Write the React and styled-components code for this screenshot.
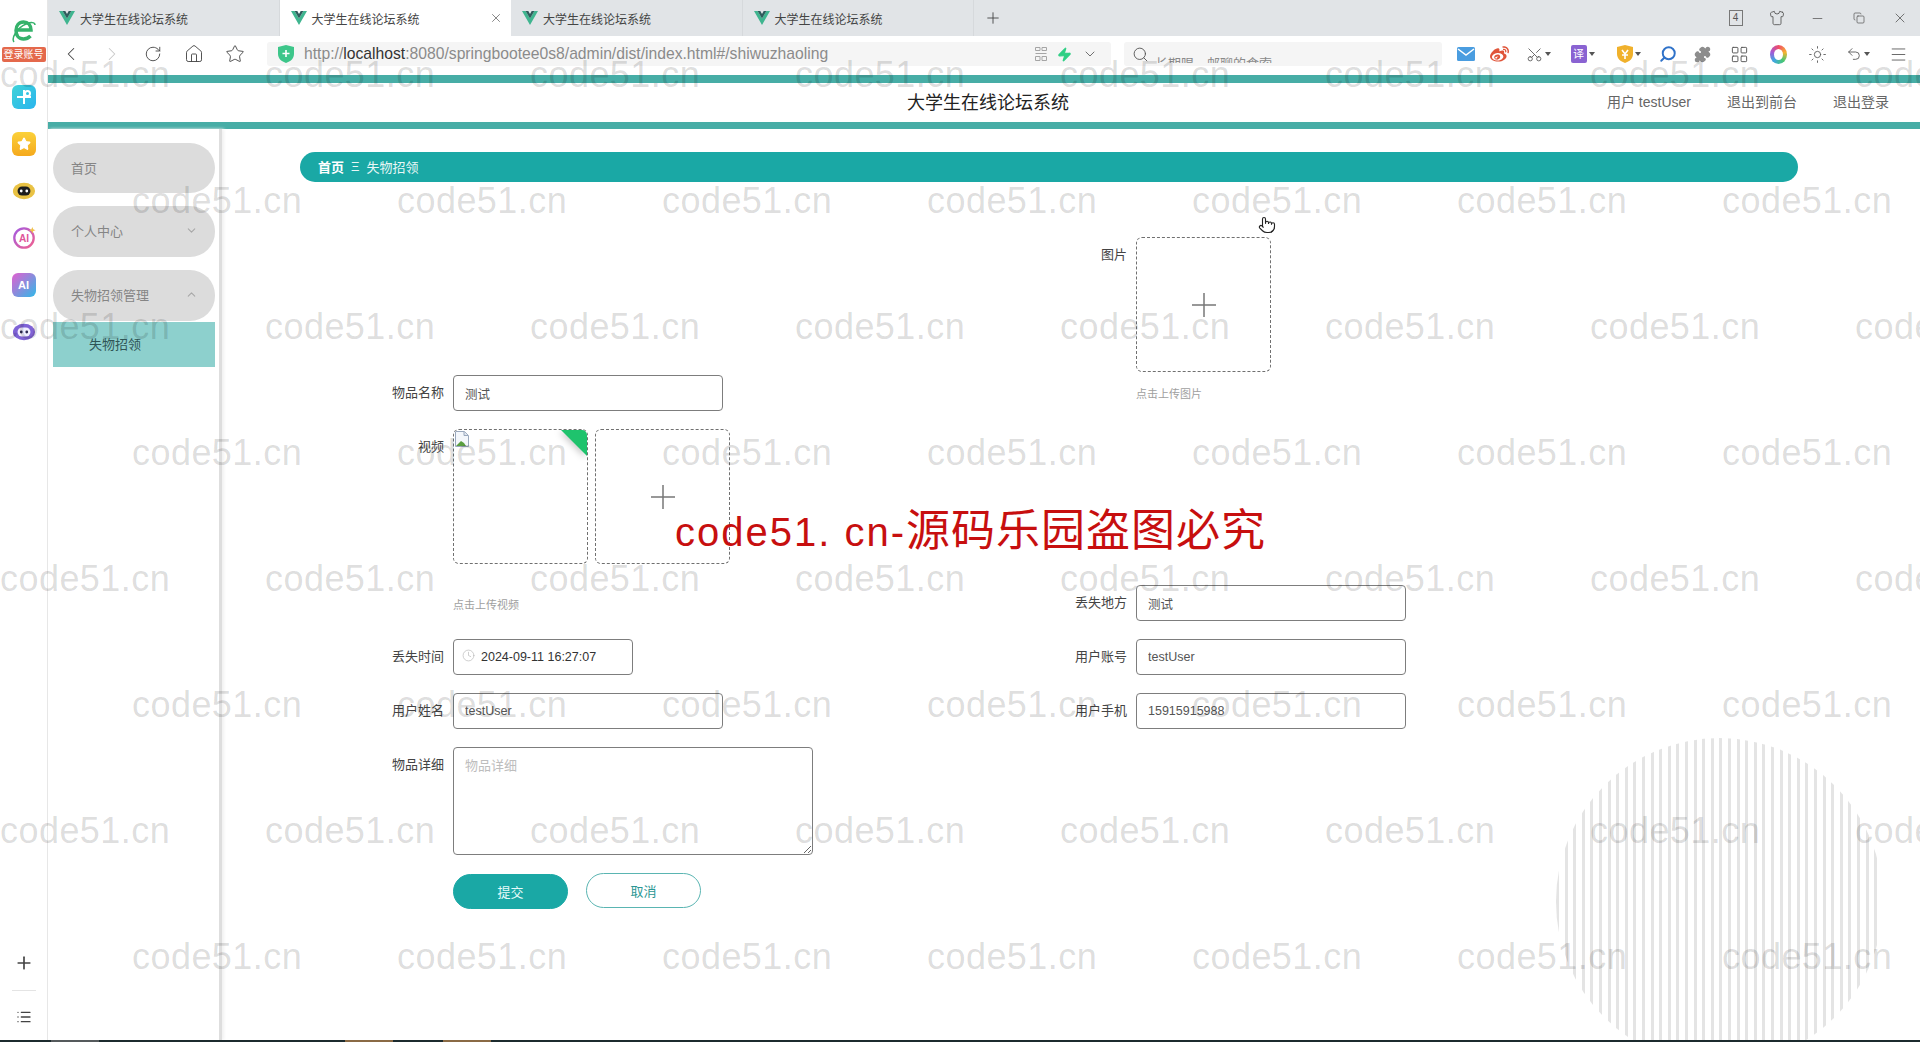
import React from 'react';
import styled, { createGlobalStyle } from 'styled-components';
import {
  ChevronDown,
  ChevronLeft,
  ChevronRight,
  ChevronUp,
  Clock,
  Copy,
  Home,
  LayoutGrid,
  List,
  Menu,
  Minus,
  Plus,
  Pointer,
  Puzzle,
  RotateCw,
  Scissors,
  Search,
  Shirt,
  Star,
  Sun,
  Undo2,
  X,
  Zap,
} from 'lucide-react';
import { FaWeibo } from 'react-icons/fa';

const GlobalStyle = createGlobalStyle`
  html, body {
    margin: 0;
    padding: 0;
    background: #ffffff;
    font-family: "Liberation Sans", "Noto Sans CJK SC", sans-serif;
  }
  * { box-sizing: border-box; }
`;

const Root = styled.div`
  position: relative;
  width: 1920px;
  height: 1042px;
  overflow: hidden;
  display: flex;
  flex-direction: column;
`;

const Body = styled.div`
  flex: 1;
  min-height: 0;
  display: flex;
`;

/* left rail of the browser */
const Rail = styled.aside`
  width: 48px;
  flex: none;
  display: flex;
  flex-direction: column;
  align-items: center;
  border-right: 1px solid #e6e6e6;
  background: #ffffff;
`;

const RailLogo = styled.div`
  width: 100%;
  height: 83px;
  padding-top: 17px;
  display: flex;
  flex-direction: column;
  align-items: center;
`;

const LoginBadge = styled.span`
  width: 44px;
  height: 15px;
  margin-top: 2px;
  background: #e4694c;
  border-radius: 2px;
  color: #ffffff;
  font-size: 10px;
  line-height: 15px;
  text-align: center;
  white-space: nowrap;
`;

const RailTile = styled.div`
  width: 24px;
  height: 24px;
  margin: 2px 0 21px;
  border-radius: ${(p) => p.$radius || '6px'};
  background: ${(p) => p.$bg};
  display: flex;
  align-items: center;
  justify-content: center;
  color: #ffffff;
  font-size: 11px;
  font-weight: 700;
`;

const RailBottom = styled.div`
  margin-top: auto;
  padding-bottom: 15px;
  display: flex;
  flex-direction: column;
  align-items: center;
  color: #444444;
`;

const RailDivider = styled.div`
  width: 24px;
  height: 1px;
  margin: 17px 0 18px;
  background: #e4e4e4;
`;

const Main = styled.div`
  flex: 1;
  min-width: 0;
  display: flex;
  flex-direction: column;
`;

/* tabs */
const TabStrip = styled.div`
  height: 36px;
  flex: none;
  display: flex;
  background: #e1e4e7;
`;

const Tab = styled.div`
  width: 231.5px;
  height: 36px;
  flex: none;
  padding-left: 11px;
  display: flex;
  align-items: center;
  gap: 5px;
  background: ${(p) => (p.$active ? '#ffffff' : 'transparent')};
  border-right: 1px solid ${(p) => (p.$active ? 'transparent' : '#d6d9dc')};
  color: #444444;
  font-size: 12px;
`;

const TabClose = styled.span`
  margin-left: auto;
  margin-right: 7px;
  display: flex;
  color: #555555;
`;

const NewTab = styled.div`
  width: 38px;
  display: flex;
  align-items: center;
  justify-content: center;
  color: #444444;
`;

const WindowControls = styled.div`
  margin-left: auto;
  display: flex;
  align-items: center;
  color: #555555;
`;

const WindowButton = styled.div`
  width: 41px;
  height: 36px;
  display: flex;
  align-items: center;
  justify-content: center;
`;

const TabCount = styled.span`
  width: 14px;
  height: 16px;
  border: 1px solid #777777;
  font-size: 10px;
  line-height: 14px;
  text-align: center;
`;

/* toolbar */
const Toolbar = styled.div`
  height: 39px;
  flex: none;
  padding: 6px 0 0 2px;
  display: flex;
  align-items: flex-start;
  background: #ffffff;
`;

const NavButton = styled.div`
  width: 41px;
  height: 24px;
  display: flex;
  align-items: center;
  justify-content: center;
  color: ${(p) => (p.$muted ? '#c8c8c8' : '#444444')};
`;

const AddressBar = styled.div`
  width: 844px;
  height: 24px;
  margin-left: 12px;
  padding: 0 13px 0 11px;
  display: flex;
  align-items: center;
  background: #f5f5f5;
  border-radius: 3px;
  color: #8b8b8b;
  font-size: 15.7px;
`;

const Url = styled.span`
  margin-left: 10px;
  white-space: nowrap;
  b {
    font-weight: 400;
    color: #333333;
  }
`;

const AddressTools = styled.div`
  margin-left: auto;
  display: flex;
  align-items: center;
  gap: 10px;
  color: #666666;
`;

const SearchBox = styled.div`
  width: 318px;
  height: 24px;
  margin-left: 13px;
  padding-left: 8px;
  display: flex;
  align-items: center;
  gap: 6px;
  background: #f5f5f5;
  border-radius: 3px;
  color: #555555;
`;

const SearchHint = styled.div`
  width: 125px;
  height: 17px;
  align-self: flex-start;
  margin-top: 4px;
  overflow: hidden;
  color: #8a8a8a;
  font-size: 13px;
  line-height: 36px;
  white-space: nowrap;
`;

const ExtensionRow = styled.div`
  margin-left: 8px;
  display: flex;
  align-items: center;
  color: #555555;
`;

const ExtButton = styled.div`
  width: ${(p) => p.$w}px;
  height: 24px;
  padding-right: ${(p) => p.$nudge || 0}px;
  display: flex;
  align-items: center;
  justify-content: center;
  gap: 2px;
`;

const Caret = styled.span`
  width: 0;
  height: 0;
  border-left: 3px solid transparent;
  border-right: 3px solid transparent;
  border-top: 4px solid #555555;
`;

const TranslateTile = styled.span`
  width: 16px;
  height: 18px;
  border-radius: 2px;
  background: #8a63d2;
  color: #ffffff;
  font-size: 11px;
  line-height: 18px;
  text-align: center;
`;

const Turned = styled.span`
  display: flex;
  transform: ${(p) => p.$turn};
`;

const ColorRing = styled.span`
  width: 17px;
  height: 19px;
  border-radius: 50%;
  background: conic-gradient(#f04d6a, #f5b32e, #48c774, #3fa7e0, #a05ad8, #f04d6a);
  display: flex;
  align-items: center;
  justify-content: center;
  &::after {
    content: '';
    width: 9px;
    height: 11px;
    border-radius: 50%;
    background: #ffffff;
  }
`;

/* site header */
const TealBar = styled.div`
  height: ${(p) => p.$h}px;
  flex: none;
  background: #47ada6;
`;

const Header = styled.header`
  height: 39px;
  flex: none;
  padding: 0 31px 4px 39px;
  display: grid;
  grid-template-columns: 1fr auto 1fr;
  align-items: center;
  background: #ffffff;
`;

const Title = styled.h1`
  grid-column: 2;
  margin: 0;
  color: #222222;
  font-size: 18px;
  font-weight: 400;
`;

const HeaderLinks = styled.nav`
  justify-self: end;
  display: flex;
  gap: 36px;
  color: #666666;
  font-size: 14px;
  white-space: nowrap;
`;

const Page = styled.div`
  flex: 1;
  min-height: 0;
  display: flex;
`;

/* side menu */
const Sidebar = styled.nav`
  width: 174px;
  flex: none;
  padding: 14px 0 0 5px;
  border-right: 3px solid #dedede;
  box-shadow: 2px 0 3px #f1f1f1;
`;

const MenuItem = styled.div`
  width: 162px;
  height: ${(p) => p.$h || 51}px;
  margin-bottom: ${(p) => (p.$open ? 1 : 13)}px;
  padding: 0 17px 2px 18px;
  display: flex;
  align-items: center;
  justify-content: space-between;
  background: #dcdcdc;
  border-radius: 25px;
  color: #858585;
  font-size: 13px;
`;

const SubItem = styled.div`
  width: 162px;
  height: 45px;
  padding: 0 0 2px 36px;
  display: flex;
  align-items: center;
  background: #8dd0cd;
  color: #2f5555;
  font-size: 13px;
`;

/* content */
const Content = styled.main`
  position: relative;
  flex: 1;
  min-width: 0;
  overflow: hidden;
  padding: 23px 0 0 78px;
`;

const Breadcrumb = styled.div`
  width: 1498px;
  height: 30px;
  padding: 0 0 2px 18px;
  display: flex;
  align-items: center;
  gap: 7px;
  background: #1aa8a5;
  border-radius: 15px;
  color: #e8f7f6;
  font-size: 13px;
  b {
    color: #ffffff;
    font-weight: 700;
  }
`;

const Form = styled.form`
  margin: 55px 0 0 70px;
  display: flex;
`;

const Column = styled.div`
  width: 683px;
  flex: none;
  padding-top: ${(p) => p.$top || 0}px;
`;

const Field = styled.div`
  margin-bottom: ${(p) => p.$bottom ?? 18}px;
  display: flex;
  align-items: flex-start;
`;

const Label = styled.label`
  width: 74px;
  margin-right: 9px;
  flex: none;
  color: #444444;
  font-size: 13px;
  line-height: 36px;
  text-align: right;
`;

const Input = styled.input`
  width: ${(p) => p.$w || 270}px;
  height: 36px;
  padding: 0 11px;
  border: 1px solid #7d7d7d;
  border-radius: 4px;
  outline: none;
  background: transparent;
  color: #555555;
  font-family: inherit;
  font-size: 12.5px;
`;

const DateWrap = styled.div`
  position: relative;
  width: 180px;
`;

const DateIcon = styled.span`
  position: absolute;
  left: 9px;
  top: 10px;
  display: flex;
  color: #b5b5b5;
`;

const DateInput = styled(Input)`
  width: 100%;
  padding-left: 27px;
  color: #333333;
`;

const TextArea = styled.textarea`
  width: 360px;
  height: 108px;
  padding: 8px 11px;
  border: 1px solid #7d7d7d;
  border-radius: 4px;
  outline: none;
  display: block;
  background: transparent;
  font-family: inherit;
  font-size: 13px;
  line-height: 20px;
  &::placeholder {
    color: #bdbdbd;
  }
`;

const UploadList = styled.div`
  display: flex;
  gap: 7px;
`;

const UploadBox = styled.div`
  position: relative;
  width: 135px;
  height: 135px;
  border: 1px dashed #707070;
  border-radius: 6px;
  overflow: hidden;
  display: flex;
  align-items: center;
  justify-content: center;
  color: #777777;
`;

const BrokenImage = styled.span`
  position: absolute;
  left: 1px;
  top: 1px;
  display: flex;
`;

const Corner = styled.span`
  position: absolute;
  right: 0;
  top: 0;
  width: 0;
  height: 0;
  border-top: 26px solid #1fc36d;
  border-left: 26px solid transparent;
  filter: drop-shadow(-2px 2px 3px rgba(0, 0, 0, 0.2));
`;

const Tip = styled.div`
  margin-top: ${(p) => p.$top}px;
  color: #a0a0a0;
  font-size: 11px;
  line-height: 32px;
`;

const Actions = styled.div`
  margin-left: 83px;
  display: flex;
  align-items: flex-start;
  gap: 18px;
`;

const Button = styled.button`
  width: 115px;
  height: 35px;
  margin-top: ${(p) => (p.$primary ? 1 : 0)}px;
  padding: 0;
  border: 1px solid ${(p) => (p.$primary ? '#1aa8a5' : '#5ab5b2')};
  border-radius: 18px;
  background: ${(p) => (p.$primary ? '#1aa8a5' : '#ffffff')};
  color: ${(p) => (p.$primary ? '#e6fbfa' : '#2b9794')};
  font-family: inherit;
  font-size: 13px;
`;

const StripeCircle = styled.div`
  position: absolute;
  right: 37px;
  top: 609px;
  width: 327px;
  height: 327px;
  border-radius: 50%;
  background: repeating-linear-gradient(90deg, #e4e4e4 0 3px, transparent 3px 8.6px);
`;

const Taskbar = styled.div`
  height: 2px;
  flex: none;
  display: flex;
  background: #1c2b2e;
`;

const TaskbarSlot = styled.span`
  width: 48px;
  margin-left: ${(p) => p.$left}px;
  background: ${(p) => p.$color};
`;

/* things lying over the page */
const Watermarks = styled.div`
  position: absolute;
  left: 0;
  top: 12px;
  width: 100%;
  pointer-events: none;
`;

const WatermarkRow = styled.div`
  height: 126px;
  margin-left: ${(p) => (p.$odd ? 132 : 0)}px;
  display: flex;
  align-items: center;
`;

const WatermarkText = styled.span`
  width: 265px;
  flex: none;
  color: rgba(0, 0, 0, 0.14);
  font-size: 36px;
  letter-spacing: 0.45px;
  white-space: nowrap;
`;

const Stamp = styled.div`
  position: absolute;
  left: 675px;
  top: 503px;
  color: #c70f0f;
  font-size: 44px;
  line-height: 56px;
  letter-spacing: 1px;
  white-space: nowrap;
  pointer-events: none;
  span {
    font-size: 40px;
    letter-spacing: 2px;
  }
`;

const HandCursor = styled.span`
  position: absolute;
  left: 1258px;
  top: 216px;
  display: flex;
  color: #222222;
`;

const VueIcon = () => (
  <svg width="16" height="14" viewBox="0 0 16 14">
    <path d="M0 0h3.600L8 7.500 12.400 0H16L8 14z" fill="#3fb58f" />
    <path d="M3.600 0h2.700L8 3l1.700-3h2.700L8 7.500z" fill="#2f5c5c" />
  </svg>
);

const ELogo = () => (
  <svg width="26" height="28" viewBox="0 0 26 28" fill="none">
    <path d="M5 13h15c0-5-3-8-7.500-8S5 8.500 5 13.500 8 22 12.500 22c3 0 5-1 7-3" stroke="#35b26b" strokeWidth="3.500" />
    <path d="M3 25c-3-4 3-14 12-18 5-2 9-2 9 1" stroke="#35b26b" strokeWidth="1.500" />
  </svg>
);

const ShieldIcon = ({ color, mark }) => (
  <svg width="16" height="18" viewBox="0 0 16 18">
    <path d="M8 0l8 2v7c0 4.500-3.500 7.500-8 9-4.500-1.500-8-4.500-8-9V2z" fill={color} />
    <path d={mark} stroke="#ffffff" strokeWidth="1.600" fill="none" />
  </svg>
);

const QrIcon = () => (
  <svg width="12" height="14" viewBox="0 0 12 14" fill="none" stroke="#a5a5a5">
    <path d="M.5.500h4.500v3H.5zM7 .500h4.500v3H7zM.5 6.500h11M.5 9.500h4.500v4H.5zM7 9.500h4.500v4H7z" />
  </svg>
);

const MailIcon = () => (
  <svg width="18" height="14" viewBox="0 0 18 14">
    <rect width="18" height="14" rx="1.500" fill="#4a9de0" />
    <path d="M1 2l8 6 8-6" stroke="#ffffff" strokeWidth="1.500" fill="none" />
  </svg>
);

const BrokenImageIcon = () => (
  <svg width="15" height="16" viewBox="0 0 15 16">
    <path d="M.5.500h9l4 4v11H.5z" fill="#f4f7fb" stroke="#9aa8bd" />
    <path d="M1 15l5-5 3 2 2 3z" fill="#5a9e3f" />
    <path d="M9 .500v4h4" fill="#dfe6ef" stroke="#9aa8bd" />
  </svg>
);

const BigPlus = () => (
  <svg width="24" height="24" viewBox="0 0 24 24" stroke="currentColor" strokeWidth="1.500">
    <path d="M0 12h24M12 0v24" />
  </svg>
);

const Face = ({ bg, visor, dot }) => (
  <svg width="26" height="24" viewBox="0 0 26 24">
    <ellipse cx="13" cy="12" rx="12" ry="9" fill={bg} />
    <rect x="6" y="7" width="14" height="10" rx="5" fill={visor} />
    <circle cx="10" cy="12" r="1.500" fill={dot} />
    <circle cx="16" cy="12" r="1.500" fill={dot} />
  </svg>
);

const AiRing = () => (
  <svg width="26" height="26" viewBox="0 0 26 26">
    <defs>
      <linearGradient id="ring" x1="0" y1="0" x2="1" y2="1">
        <stop offset="0" stopColor="#a45be0" />
        <stop offset="1" stopColor="#f0608f" />
      </linearGradient>
    </defs>
    <circle cx="13" cy="13" r="10.500" fill="#ffffff" stroke="url(#ring)" strokeWidth="2.500" />
    <path d="M22 1l1 2.500L25.500 4.500 23 5.500 22 8l-1-2.500L18.500 4.500 21 3.500z" fill="#f0c14a" />
    <text x="13" y="17" textAnchor="middle" fontSize="11" fontWeight="700" fill="#e0569a">
      AI
    </text>
  </svg>
);

const CrossMark = () => (
  <svg width="18" height="18" viewBox="0 0 18 18" fill="none" stroke="#ffffff" strokeWidth="2">
    <path d="M9 2v14M2 9h14" />
    <circle cx="12.500" cy="5.500" r="2.500" />
  </svg>
);

const tabs = [{}, { active: true }, {}, {}];

const App = () => {
  return (
    <Root>
      <GlobalStyle />
      <Body>
        <Rail>
          <RailLogo>
            <ELogo />
            <LoginBadge>登录账号</LoginBadge>
          </RailLogo>
          <RailTile $bg="linear-gradient(135deg,#3fd3d8,#2ab4ee)">
            <CrossMark />
          </RailTile>
          <RailTile $bg="linear-gradient(#fbd13a,#f5a91d)">
            <Star size={14} fill="#ffffff" />
          </RailTile>
          <RailTile $bg="transparent">
            <Face bg="#e9c244" visor="#1d1d1d" dot="#ffffff" />
          </RailTile>
          <RailTile $bg="transparent" $radius="50%">
            <AiRing />
          </RailTile>
          <RailTile $bg="linear-gradient(135deg,#e35fd0,#2fb9e8)">AI</RailTile>
          <RailTile $bg="transparent">
            <Face bg="#7f63d6" visor="#f2efff" dot="#2c2a55" />
          </RailTile>
          <RailBottom>
            <Plus size={20} />
            <RailDivider />
            <List size={16} />
          </RailBottom>
        </Rail>
        <Main>
          <TabStrip>
            {tabs.map((tab, i) => (
              <Tab key={i} $active={tab.active}>
                <VueIcon />
                大学生在线论坛系统
                {tab.active && (
                  <TabClose>
                    <X size={14} strokeWidth={1.2} />
                  </TabClose>
                )}
              </Tab>
            ))}
            <NewTab>
              <Plus size={18} strokeWidth={1.2} />
            </NewTab>
            <WindowControls>
              <WindowButton>
                <TabCount>4</TabCount>
              </WindowButton>
              <WindowButton>
                <Shirt size={16} strokeWidth={1.3} />
              </WindowButton>
              <WindowButton>
                <Minus size={15} strokeWidth={1.2} />
              </WindowButton>
              <WindowButton>
                <Copy size={12} strokeWidth={1.4} />
              </WindowButton>
              <WindowButton>
                <X size={16} strokeWidth={1.2} />
              </WindowButton>
            </WindowControls>
          </TabStrip>
          <Toolbar>
            <NavButton>
              <ChevronLeft size={22} strokeWidth={1.1} />
            </NavButton>
            <NavButton $muted>
              <ChevronRight size={22} strokeWidth={1.1} />
            </NavButton>
            <NavButton>
              <RotateCw size={18} strokeWidth={1.2} />
            </NavButton>
            <NavButton>
              <Home size={20} strokeWidth={1.1} />
            </NavButton>
            <NavButton>
              <Star size={20} strokeWidth={1.1} />
            </NavButton>
            <AddressBar>
              <ShieldIcon color="#3dc68a" mark="M8 5v7M4.500 8.500h7" />
              <Url>
                http://<b>localhost</b>:8080/springbootee0s8/admin/dist/index.html#/shiwuzhaoling
              </Url>
              <AddressTools>
                <QrIcon />
                <Zap size={15} color="#2fcf84" fill="#2fcf84" />
                <ChevronDown size={16} strokeWidth={1.4} />
              </AddressTools>
            </AddressBar>
            <SearchBox>
              <Search size={17} strokeWidth={1.3} />
              <SearchHint>长期唱一邮聊的食索</SearchHint>
            </SearchBox>
            <ExtensionRow>
              <ExtButton $w={32}>
                <MailIcon />
              </ExtButton>
              <ExtButton $w={34}>
                <FaWeibo size={19} color="#e0553a" />
              </ExtButton>
              <ExtButton $w={44}>
                <Turned $turn="rotate(-90deg)">
                  <Scissors size={17} strokeWidth={1.2} />
                </Turned>
                <Caret />
              </ExtButton>
              <ExtButton $w={50} $nudge={5}>
                <TranslateTile>译</TranslateTile>
                <Caret />
              </ExtButton>
              <ExtButton $w={38}>
                <ShieldIcon color="#f0b12c" mark="M5 5l3 4 3-4M8 9v5M5 10h6" />
                <Caret />
              </ExtButton>
              <ExtButton $w={40}>
                <Turned $turn="scaleX(-1)">
                  <Search size={18} color="#2f72c9" strokeWidth={2.6} />
                </Turned>
              </ExtButton>
              <ExtButton $w={28}>
                <Puzzle size={17} color="#8d8d8d" fill="#8d8d8d" />
              </ExtButton>
              <ExtButton $w={46}>
                <LayoutGrid size={19} strokeWidth={1.2} />
              </ExtButton>
              <ExtButton $w={32}>
                <ColorRing />
              </ExtButton>
              <ExtButton $w={46}>
                <Sun size={19} strokeWidth={1.1} />
              </ExtButton>
              <ExtButton $w={36}>
                <Undo2 size={16} strokeWidth={1.3} />
                <Caret />
              </ExtButton>
              <ExtButton $w={44}>
                <Menu size={19} strokeWidth={1.1} />
              </ExtButton>
            </ExtensionRow>
          </Toolbar>
          <TealBar $h={8} />
          <Header>
            <Title>大学生在线论坛系统</Title>
            <HeaderLinks>
              <span>用户 testUser</span>
              <span>退出到前台</span>
              <span>退出登录</span>
            </HeaderLinks>
          </Header>
          <TealBar $h={7} />
          <Page>
            <Sidebar>
              <MenuItem $h={50}>首页</MenuItem>
              <MenuItem>
                个人中心
                <ChevronDown size={13} color="#a8a8a8" />
              </MenuItem>
              <MenuItem $open>
                失物招领管理
                <ChevronUp size={13} color="#a8a8a8" />
              </MenuItem>
              <SubItem>失物招领</SubItem>
            </Sidebar>
            <Content>
              <StripeCircle />
              <Breadcrumb>
                <b>首页</b>
                <span>Ξ</span>
                <span>失物招领</span>
              </Breadcrumb>
              <Form>
                <Column $top={138}>
                  <Field>
                    <Label>物品名称</Label>
                    <Input defaultValue="测试" />
                  </Field>
                  <Field>
                    <Label>视频</Label>
                    <div>
                      <UploadList>
                        <UploadBox>
                          <BrokenImage>
                            <BrokenImageIcon />
                          </BrokenImage>
                          <Corner />
                        </UploadBox>
                        <UploadBox>
                          <BigPlus />
                        </UploadBox>
                      </UploadList>
                      <Tip $top={25}>点击上传视频</Tip>
                    </div>
                  </Field>
                  <Field>
                    <Label>丢失时间</Label>
                    <DateWrap>
                      <DateIcon>
                        <Clock size={13} strokeWidth={1.2} />
                      </DateIcon>
                      <DateInput defaultValue="2024-09-11 16:27:07" />
                    </DateWrap>
                  </Field>
                  <Field>
                    <Label>用户姓名</Label>
                    <Input defaultValue="testUser" />
                  </Field>
                  <Field>
                    <Label>物品详细</Label>
                    <TextArea placeholder="物品详细" />
                  </Field>
                  <Actions>
                    <Button $primary type="button">
                      提交
                    </Button>
                    <Button type="button">取消</Button>
                  </Actions>
                </Column>
                <Column>
                  <Field $bottom={175}>
                    <Label>图片</Label>
                    <div>
                      <UploadBox>
                        <BigPlus />
                      </UploadBox>
                      <Tip $top={6}>点击上传图片</Tip>
                    </div>
                  </Field>
                  <Field>
                    <Label>丢失地方</Label>
                    <Input defaultValue="测试" />
                  </Field>
                  <Field>
                    <Label>用户账号</Label>
                    <Input defaultValue="testUser" />
                  </Field>
                  <Field>
                    <Label>用户手机</Label>
                    <Input defaultValue="15915915988" />
                  </Field>
                </Column>
              </Form>
            </Content>
          </Page>
        </Main>
      </Body>
      <Taskbar>
        <TaskbarSlot $left={51} $color="#555a5c" />
        <TaskbarSlot $left={246} $color="#8a6a45" />
        <TaskbarSlot $left={50} $color="#8a6a45" />
      </Taskbar>
      <Watermarks>
        {[0, 1, 2, 3, 4, 5, 6, 7].map((row) => (
          <WatermarkRow key={row} $odd={row % 2 === 1}>
            {[0, 1, 2, 3, 4, 5, 6, 7].map((col) => (
              <WatermarkText key={col}>code51.cn</WatermarkText>
            ))}
          </WatermarkRow>
        ))}
      </Watermarks>
      <Stamp>
        <span>code51. cn-</span>源码乐园盗图必究
      </Stamp>
      <HandCursor>
        <Pointer size={18} strokeWidth={1.5} fill="#ffffff" />
      </HandCursor>
    </Root>
  );
};

export default App;
